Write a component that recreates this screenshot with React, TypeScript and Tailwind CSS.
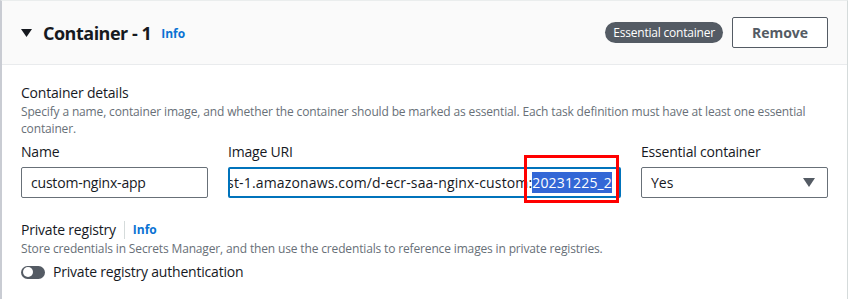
import React from 'react';

const font = { fontFamily: '"Open Sans", "Noto Sans", Arial, sans-serif' };

const App: React.FC = () => {
  return (
    <div className="w-[851px] h-[299px] bg-white overflow-hidden" style={font}>
      <div className="w-[848px] h-full border-l-2 border-r border-t border-l-[#c9ccd3] border-r-[#d5dbdb] border-t-[#eaeded] bg-white">
        {/* header */}
        <div className="h-[64px] bg-[#fafafa] border-b border-[#e9ebed] flex items-center pl-[19px] pr-[19px]">
          <svg width="11" height="8" viewBox="0 0 11 8" className="mr-[11px] mt-[1px]">
            <path d="M0 0 H11 L5.5 8 Z" fill="#16191f" />
          </svg>
          <h2 className="text-[18px] font-bold text-[#16191f] leading-none tracking-[-0.5px]">Container - 1</h2>
          <span className="ml-[10px] text-[12px] font-bold text-[#0972d3] mt-[2px]">Info</span>
          <div className="ml-auto flex items-center gap-[9px]">
            <span className="h-[21px] px-[8px] rounded-full bg-[#545b64] text-white text-[12px] tracking-[-0.2px] flex items-center">
              Essential container
            </span>
            <button className="h-[31px] w-[96px] border border-[#545b64] rounded-[2px] bg-white text-[14px] font-bold text-[#545b64]">
              Remove
            </button>
          </div>
        </div>

        {/* body */}
        <div className="px-[19px] pt-[18px]">
          <div className="text-[14px] text-[#16191f] leading-[20px] tracking-[-0.2px]">Container details</div>
          <p className="text-[12px] text-[#687078] leading-[17px] pr-[20px] tracking-[-0.15px]">
            Specify a name, container image, and whether the container should be marked as essential. Each task definition must have at least one essential container.
          </p>

          <div className="relative grid grid-cols-[187px_393px_187px] gap-x-[20px] mt-[5px]">
            <div>
              <div className="text-[14px] text-[#16191f] leading-[20px] mb-[5px] tracking-[-0.2px]">Name</div>
              <div className="h-[31px] border border-[#687078] rounded-[2px] px-[9px] flex items-center text-[14px] text-[#16191f] tracking-[-0.2px]">
                custom-nginx-app
              </div>
            </div>
            <div>
              <div className="text-[14px] text-[#16191f] leading-[20px] mb-[5px] tracking-[-0.2px]">Image URI</div>
              <div className="h-[31px] border-2 border-[#0073bb] rounded-[2px] pr-[7px] flex items-center justify-end overflow-hidden whitespace-nowrap text-[14px] text-[#16191f] tracking-[0.15px]">
                <span>123456789012.dkr.ecr.ap-northeast-1.amazonaws.com/d-ecr-saa-nginx-custom:</span>
                <span className="bg-[#3367d6] text-white">20231225_2</span>
              </div>
            </div>
            <div>
              <div className="text-[14px] text-[#16191f] leading-[20px] mb-[5px] tracking-[-0.2px]">Essential container</div>
              <div className="h-[31px] border border-[#687078] rounded-[2px] pl-[9px] pr-[12px] flex items-center justify-between text-[14px] text-[#16191f]">
                <span>Yes</span>
                <svg width="12" height="9" viewBox="0 0 12 9">
                  <path d="M0 0 H12 L6 9 Z" fill="#545b64" />
                </svg>
              </div>
            </div>
            {/* annotation box */}
            <div className="absolute left-[503px] top-[13px] w-[95px] h-[48px] border-[3px] border-[#ff0000] pointer-events-none" />
          </div>

          <div className="mt-[22px] flex items-center">
            <span className="text-[14px] text-[#16191f] leading-[20px] tracking-[-0.2px]">Private registry</span>
            <span className="mx-[8px] w-px h-[18px] bg-[#d5dbdb]" />
            <span className="text-[12px] font-bold text-[#0972d3]">Info</span>
          </div>
          <p className="text-[12px] text-[#687078] leading-[17px] tracking-[-0.15px]">
            Store credentials in Secrets Manager, and then use the credentials to reference images in private registries.
          </p>
          <div className="mt-[5px] flex items-center gap-[8px]">
            <span className="w-[24px] h-[13px] rounded-full bg-[#545b64] flex items-center px-[2px]">
              <span className="w-[10px] h-[10px] rounded-full bg-white" />
            </span>
            <span className="text-[14px] text-[#16191f] leading-[20px] tracking-[-0.2px]">Private registry authentication</span>
          </div>
        </div>
      </div>
    </div>
  );
};

export default App;
